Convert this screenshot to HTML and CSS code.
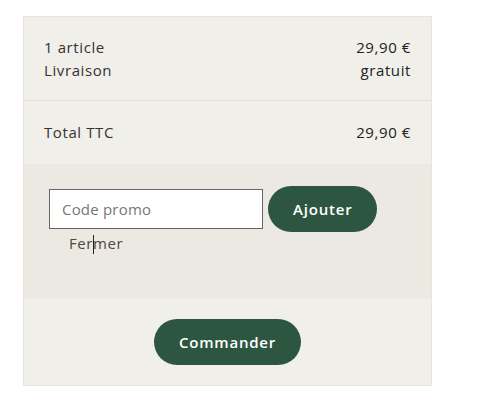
FILE: index.html
```html
<!DOCTYPE html>
<html lang="fr">
  <head>
    <meta charset="UTF-8" />
    <meta name="viewport" content="width=device-width, initial-scale=1.0" />
    <title>Panier</title>
    <link rel="stylesheet" href="styles.css">
  </head>
  <body>
    <div class="cart">
      <div class="summary">
        <div class="line">
          <span>1 article</span>
          <span class="amount">29,90 €</span>
        </div>
        <div class="line">
          <span>Livraison</span>
          <span class="amount">gratuit</span>
        </div>
      </div>
      <div class="total">
        <div class="line">
          <span>Total TTC</span>
          <span class="amount">29,90 €</span>
        </div>
      </div>
      <div class="promo">
        <div class="promo-row">
          <input type="text" class="promo-input" placeholder="Code promo" />
          <button class="btn">Ajouter</button>
        </div>
        <a class="close-link">Fer<span class="caret"></span>mer</a>
      </div>
      <div class="checkout">
        <button class="btn">Commander</button>
      </div>
    </div>
  </body>
</html>
```

FILE: styles.css
```css
body {
  margin: 8px;
  font-family: "Open Sans", "DejaVu Sans", sans-serif;
  font-size: 15px;
  color: #333;
  background: #fff;
}

.cart {
  width: 407px;
  margin: 8px 0 0 15px;
  background-color: #f1efea;
  border: 1px solid #ebe5d6;
}

.line {
  display: flex;
  justify-content: space-between;
  line-height: 23px;
  letter-spacing: 0.6px;
}

.amount {
  color: #222;
}

.summary {
  padding: 19px 20px 18px;
  border-bottom: 1px solid #e4e0d8;
}

.total {
  padding: 20px 20px;
}

.promo {
  height: 112px;
  padding: 22px 25px 0;
  background-color: #ece9e2;
}

.promo-row {
  display: flex;
  align-items: center;
  gap: 5px;
}

.promo-input {
  width: 188px;
  height: 38px;
  margin: 0;
  padding: 0 12px;
  border: 1px solid #666;
  background: #fff;
  font-family: inherit;
  font-size: 15px;
  letter-spacing: 0.2px;
  outline: none;
}

.promo-input::placeholder {
  color: #777;
}

.close-link {
  display: inline-block;
  position: relative;
  margin: 1px 0 0 20px;
  line-height: 20px;
  color: #4f4646;
  letter-spacing: 0.6px;
}

.caret {
  display: inline-block;
  width: 1px;
  height: 19px;
  margin: 0 -1px 0 0;
  background: #222;
  vertical-align: -5px;
}

.checkout {
  padding: 21px 0 20px;
  text-align: center;
}

.btn {
  height: 46px;
  padding: 0 25px;
  border: none;
  border-radius: 23px;
  background-color: #2d5641;
  color: #fff;
  font-family: inherit;
  font-size: 15px;
  font-weight: 600;
  letter-spacing: 0.8px;
  cursor: pointer;
}
```
